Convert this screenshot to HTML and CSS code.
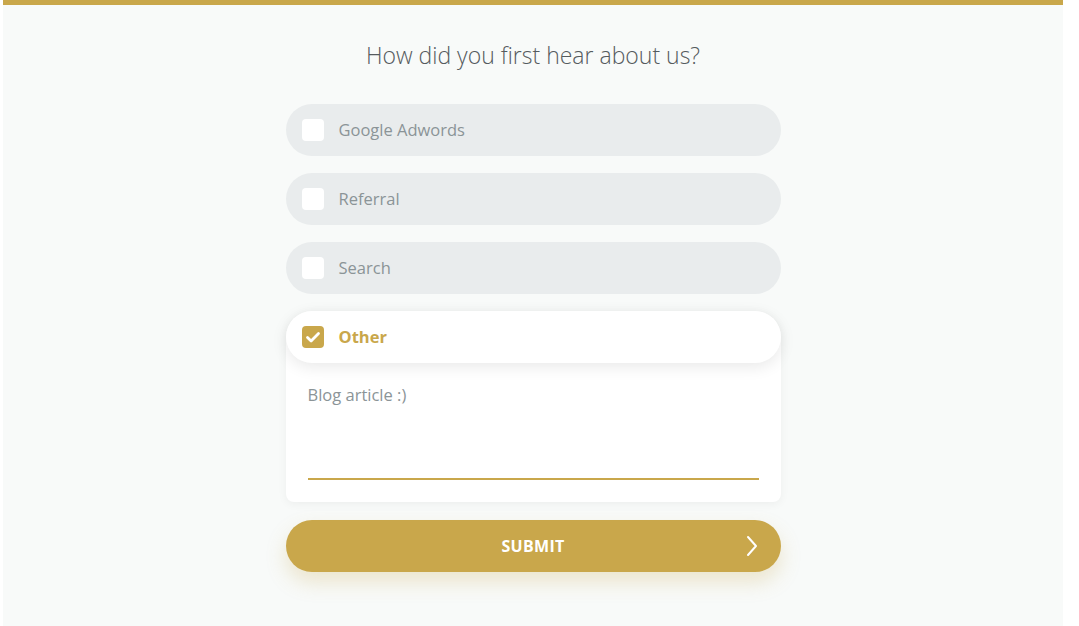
FILE: index.html
```html
<!DOCTYPE html>
<html lang="en">
  <head>
    <meta charset="UTF-8" />
    <meta name="viewport" content="width=device-width, initial-scale=1" />
    <title>How did you first hear about us?</title>
    <link rel="stylesheet" href="styles.css">
  </head>
  <body>
    <div class="page">
      <h1 class="question">How did you first hear about us?</h1>

      <form class="survey" onsubmit="event.preventDefault()">
        <label class="option">
          <span class="box"></span>
          <span class="label">Google Adwords</span>
        </label>
        <label class="option">
          <span class="box"></span>
          <span class="label">Referral</span>
        </label>
        <label class="option">
          <span class="box"></span>
          <span class="label">Search</span>
        </label>

        <div class="other-card">
          <label class="option checked">
            <span class="box">
              <svg viewBox="0 0 22 22" width="22" height="22">
                <path d="M5.5 11.5l3.6 3.6L16.5 7.5" fill="none" stroke="#fff" stroke-width="2.8" stroke-linecap="round" stroke-linejoin="round" />
              </svg>
            </span>
            <span class="label">Other</span>
          </label>
          <div class="other-text">
            <textarea rows="3">Blog article :)</textarea>
          </div>
        </div>

        <button type="submit" class="submit">
          SUBMIT
          <svg class="chevron" viewBox="0 0 14 24" width="14" height="24">
            <path d="M3 3l8 9-8 9" fill="none" stroke="#fff" stroke-width="2" stroke-linecap="round" stroke-linejoin="round" />
          </svg>
        </button>
      </form>
    </div>
  </body>
</html>
```

FILE: styles.css
```css
html, body {
  margin: 0;
  background: #fff;
}
body {
  font-family: "Open Sans", Arial, sans-serif;
  padding: 0 16px 0 3px;
}
.page {
  background: #f8faf9;
  border-top: 5px solid #c9a74b;
  height: 626px;
  box-sizing: border-box;
  overflow: hidden;
}
.question {
  margin: 0;
  padding-top: 35px;
  text-align: center;
  font-weight: 300;
  font-size: 23px;
  line-height: 30px;
  color: #555b5e;
}
.survey {
  width: 495px;
  margin: 34px auto 0;
  display: flex;
  flex-direction: column;
  gap: 17px;
}
.option {
  display: flex;
  align-items: center;
  height: 52px;
  border-radius: 26px;
  background: #e9eced;
  padding-left: 16px;
  cursor: pointer;
}
.box {
  width: 22px;
  height: 22px;
  border-radius: 4px;
  background: #fff;
  display: flex;
}
.label {
  margin-left: 15px;
  font-size: 16.5px;
  line-height: 22px;
  color: #8b9497;
}
.other-card {
  background: #fff;
  border-radius: 26px 26px 8px 8px;
  box-shadow: 0 2px 10px rgba(0, 0, 0, 0.05);
}
.option.checked {
  background: #fff;
  box-shadow: 0 4px 16px rgba(0, 0, 0, 0.09);
}
.option.checked .box {
  background: #c9a74b;
}
.option.checked .label {
  color: #c9a74b;
  font-weight: 700;
}
.other-text {
  padding: 20px 22px 22px;
}
.other-text textarea {
  display: block;
  width: 100%;
  box-sizing: border-box;
  border: none;
  border-bottom: 2px solid #c9a74b;
  resize: none;
  outline: none;
  padding: 0;
  height: 97px;
  font-family: "Open Sans", Arial, sans-serif;
  font-size: 16.5px;
  line-height: 24px;
  color: #8b9497;
}
.submit {
  position: relative;
  height: 52px;
  margin-top: 1px;
  border: none;
  border-radius: 26px;
  background: #c9a74b;
  color: #fff;
  font-family: "Open Sans", Arial, sans-serif;
  font-weight: 700;
  font-size: 16px;
  letter-spacing: 0.3px;
  cursor: pointer;
  box-shadow: 0 10px 20px rgba(201, 167, 75, 0.25);
}
.chevron {
  position: absolute;
  right: 22px;
  top: 14px;
}
```
